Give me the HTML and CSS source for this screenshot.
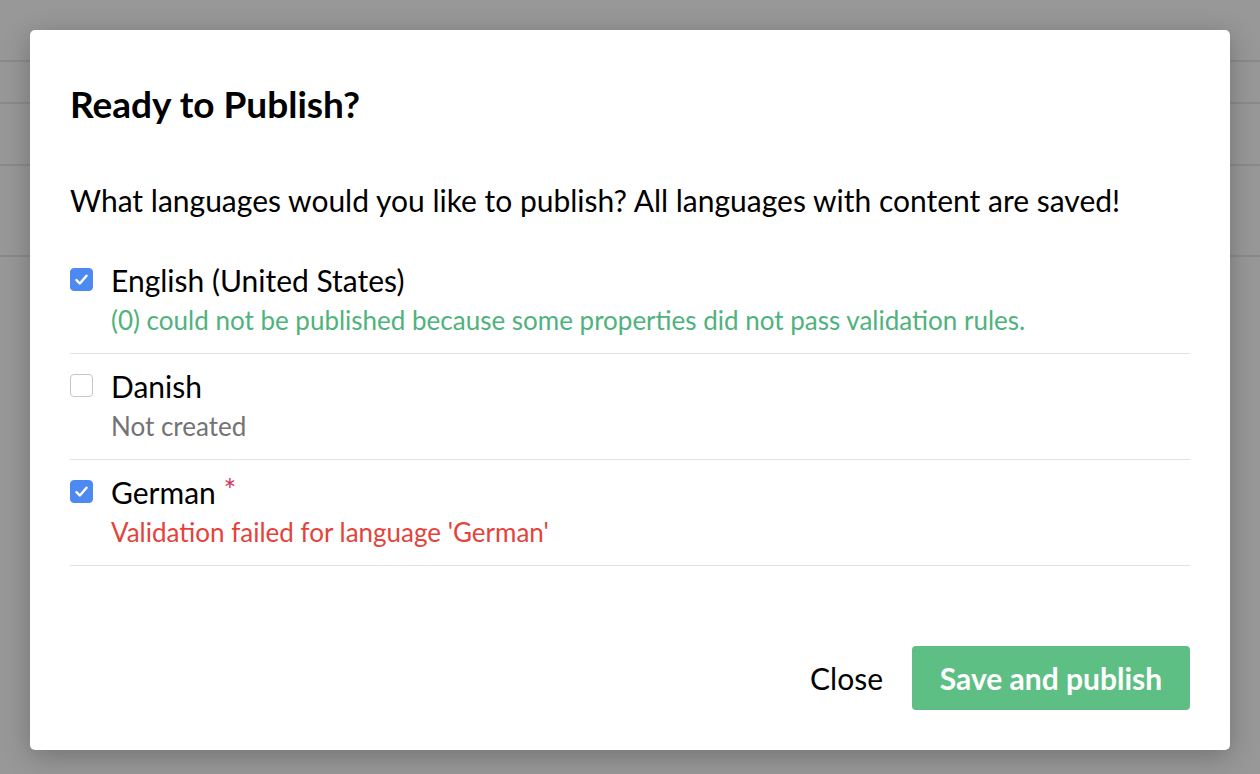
FILE: index.html
```html
<!DOCTYPE html>
<html>
<head>
<meta charset="utf-8">
<link rel="stylesheet" href="styles.css">
</head>
<body>
<div class="page">
  <div class="bg-row r1"></div>
  <div class="bg-row r2"></div>
  <div class="bg-row r3"></div>
  <div class="bg-row r4"></div>
</div>
<div class="backdrop">
  <div class="modal">
    <h1 class="title">Ready to Publish?</h1>
    <p class="intro">What languages would you like to publish? All languages with content are saved!</p>
    <ul class="langs">
      <li class="lang">
        <span class="check checked"><svg viewBox="0 0 20 20"><path d="M5.2 10.6l3.2 3.2 6.4-7.4" fill="none" stroke="#fff" stroke-width="2.3" stroke-linecap="round" stroke-linejoin="round"/></svg></span>
        <div class="lang-body">
          <div class="lang-name">English (United States)</div>
          <div class="lang-desc ok">(0) could not be published because some properties did not pass validation rules.</div>
        </div>
      </li>
      <li class="lang">
        <span class="check"></span>
        <div class="lang-body">
          <div class="lang-name">Danish</div>
          <div class="lang-desc muted">Not created</div>
        </div>
      </li>
      <li class="lang">
        <span class="check checked"><svg viewBox="0 0 20 20"><path d="M5.2 10.6l3.2 3.2 6.4-7.4" fill="none" stroke="#fff" stroke-width="2.3" stroke-linecap="round" stroke-linejoin="round"/></svg></span>
        <div class="lang-body">
          <div class="lang-name">German <span class="req">*</span></div>
          <div class="lang-desc err">Validation failed for language 'German'</div>
        </div>
      </li>
    </ul>
    <div class="footer">
      <button class="btn-link">Close</button>
      <button class="btn-primary">Save and publish</button>
    </div>
  </div>
</div>
</body>
</html>
```
FILE: styles.css
```css
* { box-sizing: border-box; }
html, body { margin: 0; padding: 0; }
body {
  width: 1260px;
  height: 774px;
  overflow: hidden;
  font-family: Lato, "Open Sans", sans-serif;
  background: #f4f4f4;
  position: relative;
}
.page { display: flex; flex-direction: column; }
.bg-row { border-bottom: 2px solid #dcdcdc; }
.r1 { height: 62px; }
.r2 { height: 42px; }
.r3 { height: 62px; }
.r4 { height: 91px; }
.backdrop {
  position: absolute;
  inset: 0;
  background: rgba(40, 40, 40, 0.45);
  padding: 30px;
}
.modal {
  background: #fff;
  border-radius: 5px;
  height: 720px;
  padding: 51px 40px 40px;
  display: flex;
  flex-direction: column;
  box-shadow: 0 6px 28px rgba(0,0,0,0.25);
}
.title {
  margin: 0;
  font-size: 37px;
  font-weight: 700;
  line-height: 46px;
  color: #000;
}
.intro {
  margin: 54px 0 0;
  font-size: 30px;
  line-height: 38px;
  color: #000;
}
.langs {
  list-style: none;
  margin: 28px 0 0;
  padding: 0;
}
.lang {
  display: flex;
  gap: 18px;
  padding: 14px 0 17px;
  border-bottom: 1px solid #e2e2e2;
}
.lang:first-child { padding-top: 15px; }
.check {
  width: 23px;
  height: 23px;
  margin-top: 6px;
  border-radius: 4px;
  border: 1px solid #c6c6c6;
  background: #fff;
  flex: none;
  display: flex;
}
.check.checked {
  background: #4c89f0;
  border-color: #4c89f0;
}
.check svg { width: 100%; height: 100%; }
.lang-name {
  font-size: 30px;
  line-height: 36px;
  color: #000;
}
.req { color: #cf3760; font-size: 30px; position: relative; top: -3px; }
.lang-desc {
  margin-top: 6px;
  font-size: 26px;
  line-height: 32px;
}
.ok { color: #50b27c; }
.muted { color: #737373; }
.err { color: #e4433b; }
.footer {
  margin-top: auto;
  display: flex;
  justify-content: flex-end;
  align-items: center;
  gap: 29px;
}
.btn-link {
  border: 0;
  background: none;
  font-family: inherit;
  font-size: 30px;
  color: #000;
  padding: 0;
}
.btn-primary {
  border: 0;
  border-radius: 4px;
  background: #5ebf84;
  color: #fff;
  font-family: inherit;
  font-weight: 700;
  font-size: 30px;
  height: 64px;
  width: 278px;
  padding: 0;
}
```
